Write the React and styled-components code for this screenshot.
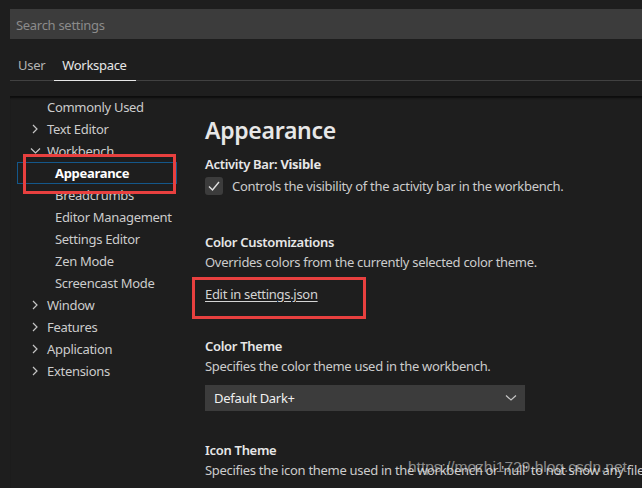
import React from 'react';
import styled, { createGlobalStyle } from 'styled-components';

const Global = createGlobalStyle`
  html, body {
    margin: 0;
    padding: 0;
    background: #1e1e1e;
    height: 488px;
    overflow: hidden;
  }
  body {
    font-family: "Noto Sans", "Open Sans", sans-serif;
    font-size: 13px;
    letter-spacing: -0.3px;
    color: #cccccc;
  }
`;

const Page = styled.div`
  position: relative;
  height: 488px;
  padding: 9px 0 0 10px;
  box-sizing: border-box;
  overflow: hidden;
`;

const Search = styled.div`
  height: 30px;
  background: #3c3c3c;
  display: flex;
  align-items: center;
  padding: 2px 0 0 6px;
  box-sizing: border-box;
  color: #8b8b8b;
  font-size: 13px;
`;

const Tabs = styled.div`
  margin-top: 10px;
  display: flex;
  border-bottom: 1px solid #414141;
`;

const Tab = styled.div`
  height: 32px;
  display: flex;
  align-items: center;
  padding: 0 9px 0 8px;
  color: ${(p) => (p.active ? '#e7e7e7' : '#b4b4b4')};
  margin-bottom: -1px;
  border-bottom: 1px solid ${(p) => (p.active ? '#e7e7e7' : 'transparent')};
  box-sizing: border-box;
`;

const Body = styled.div`
  margin-top: 15px;
  display: flex;
  box-shadow: inset 0 3px 2px -1px #0d0d0d;
  height: 400px;
`;

const Tree = styled.div`
  width: 160px;
  margin-left: 7px;
  flex-shrink: 0;
`;

const Row = styled.div`
  height: 22px;
  display: flex;
  align-items: center;
  padding-left: ${(p) => p.indent}px;
  color: ${(p) => (p.selected ? '#ffffff' : '#cccccc')};
  font-weight: ${(p) => (p.selected ? 700 : 400)};
  outline: ${(p) => (p.selected ? '1px solid #14578a' : 'none')};
  outline-offset: -1px;
  white-space: nowrap;
`;

const Twistie = styled.svg`
  width: 19px;
  height: 22px;
  flex-shrink: 0;
`;

const Content = styled.div`
  margin-left: 28px;
  flex: 1;
  min-width: 0;
`;

const Title = styled.div`
  margin-top: 18px;
  font-size: 23px;
  line-height: 32px;
  font-weight: 600;
  color: #e7e7e7;
`;

const Setting = styled.div`
  padding-top: ${(p) => p.gap}px;
`;

const Label = styled.div`
  line-height: 20px;
  font-weight: 600;
  color: #e7e7e7;
  b {
    font-weight: 700;
  }
`;

const Desc = styled.div`
  line-height: 20px;
  color: #cccccc;
  white-space: nowrap;
`;

const CheckRow = styled.div`
  display: flex;
  align-items: center;
  gap: 9px;
  height: 19px;
  margin-top: 2px;
`;

const Checkbox = styled.div`
  width: 18px;
  height: 18px;
  border-radius: 3px;
  background: #3c3c3c;
  display: flex;
  align-items: center;
  justify-content: center;
`;

const Link = styled.a`
  display: inline-block;
  margin-top: 12px;
  line-height: 20px;
  color: #d4d4d4;
  text-decoration: underline;
  text-underline-offset: 2px;
`;

const Select = styled.div`
  margin-top: 9px;
  width: 320px;
  height: 26px;
  background: #3c3c3c;
  display: flex;
  align-items: center;
  justify-content: space-between;
  padding: 0 8px 0 9px;
  box-sizing: border-box;
  color: #f0f0f0;
`;

const Mark = styled.div`
  position: absolute;
  left: ${(p) => p.x}px;
  top: ${(p) => p.y}px;
  width: ${(p) => p.w}px;
  height: ${(p) => p.h}px;
  border: 3px solid #e8403f;
  box-sizing: border-box;
  pointer-events: none;
`;

const Watermark = styled.div`
  position: absolute;
  left: 408px;
  top: 458px;
  font-family: "Liberation Sans", sans-serif;
  font-size: 15.5px;
  letter-spacing: 0;
  color: rgba(235, 235, 235, 0.55);
  white-space: nowrap;
`;

const Right = () => (
  <Twistie viewBox="0 0 19 22">
    <path d="M5 7 L9 11 L5 15" fill="none" stroke="#c5c5c5" strokeWidth="1.2" />
  </Twistie>
);

const Down = () => (
  <Twistie viewBox="0 0 19 22">
    <path d="M3 8.5 L7.5 13 L12 8.5" fill="none" stroke="#c5c5c5" strokeWidth="1.2" />
  </Twistie>
);

const tree = [
  { label: 'Commonly Used', indent: 30 },
  { label: 'Text Editor', indent: 11, icon: 'right' },
  { label: 'Workbench', indent: 11, icon: 'down' },
  { label: 'Appearance', indent: 38, selected: true },
  { label: 'Breadcrumbs', indent: 38 },
  { label: 'Editor Management', indent: 38 },
  { label: 'Settings Editor', indent: 38 },
  { label: 'Zen Mode', indent: 38 },
  { label: 'Screencast Mode', indent: 38 },
  { label: 'Window', indent: 11, icon: 'right' },
  { label: 'Features', indent: 11, icon: 'right' },
  { label: 'Application', indent: 11, icon: 'right' },
  { label: 'Extensions', indent: 11, icon: 'right' },
];

export default function App() {
  return (
    <>
      <Global />
      <Page>
        <Search>Search settings</Search>
        <Tabs>
          <Tab>User</Tab>
          <Tab active>Workspace</Tab>
        </Tabs>
        <Body>
          <Tree>
            {tree.map((t) => (
              <Row key={t.label} indent={t.indent} selected={t.selected}>
                {t.icon === 'right' && <Right />}
                {t.icon === 'down' && <Down />}
                {t.label}
              </Row>
            ))}
          </Tree>
          <Content>
            <Title>Appearance</Title>
            <Setting gap={8}>
              <Label>
                Activity Bar: <b>Visible</b>
              </Label>
              <CheckRow>
                <Checkbox>
                  <svg width="14" height="14" viewBox="0 0 14 14">
                    <path d="M2 7.5 L5.5 11 L12 3" fill="none" stroke="#e0e0e0" strokeWidth="1.4" />
                  </svg>
                </Checkbox>
                <Desc>Controls the visibility of the activity bar in the workbench.</Desc>
              </CheckRow>
            </Setting>
            <Setting gap={37}>
              <Label>Color Customizations</Label>
              <Desc>Overrides colors from the currently selected color theme.</Desc>
              <Link>Edit in settings.json</Link>
            </Setting>
            <Setting gap={32}>
              <Label>Color Theme</Label>
              <Desc>Specifies the color theme used in the workbench.</Desc>
              <Select>
                <span>Default Dark+</span>
                <svg width="12" height="8" viewBox="0 0 12 8">
                  <path d="M1 1.5 L6 6 L11 1.5" fill="none" stroke="#c5c5c5" strokeWidth="1.2" />
                </svg>
              </Select>
            </Setting>
            <Setting gap={29}>
              <Label>Icon Theme</Label>
              <Desc>Specifies the icon theme used in the workbench or 'null' to not show any file icons.</Desc>
            </Setting>
          </Content>
        </Body>
        <Mark x={23} y={154} w={153} h={40} />
        <Mark x={192} y={277} w={174} h={42} />
        <Watermark>https://mozhi1729.blog.csdn.net</Watermark>
      </Page>
    </>
  );
}
